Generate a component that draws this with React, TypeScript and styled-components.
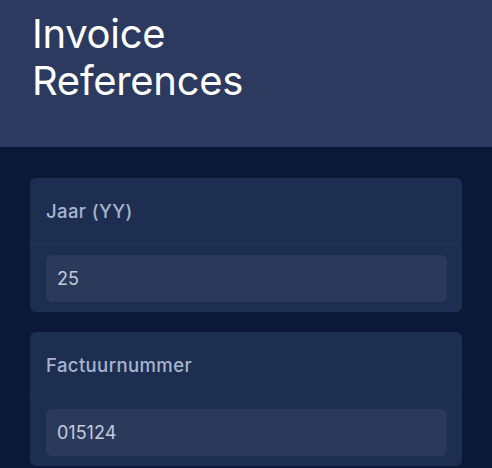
import React from "react";
import styled, { createGlobalStyle } from "styled-components";

const GlobalStyle = createGlobalStyle`
    html, body {
        margin: 0;
        padding: 0;
        background: #0a1937;
        font-family: Inter, "Noto Sans", sans-serif;
    }
`;

interface Field {
    label: string;
    value: string;
}

const fields: Field[] = [
    { label: "Jaar (YY)", value: "25" },
    { label: "Factuurnummer", value: "015124" },
];

const App = () => {
    return (
        <>
            <GlobalStyle />
            <Page>
                <Header>
                    <Title>
                        Invoice
                        <br />
                        References
                    </Title>
                </Header>
                <Content>
                    {fields.map((field) => (
                        <Card key={field.label}>
                            <CardHead>
                                <Label>{field.label}</Label>
                            </CardHead>
                            <CardBody>
                                <Input type="text" defaultValue={field.value} />
                            </CardBody>
                        </Card>
                    ))}
                </Content>
            </Page>
        </>
    );
};

const Page = styled.div`
    min-height: 468px;
    background: #0a1937;
`;

const Header = styled.header`
    background: #2b3a5e;
    padding: 10px 32px 43px;
`;

const Title = styled.h1`
    margin: 0;
    font-size: 40px;
    font-weight: 400;
    line-height: 47px;
    color: #ffffff;
    letter-spacing: -0.3px;
`;

const Content = styled.main`
    display: flex;
    flex-direction: column;
    gap: 20px;
    padding: 31px 30px;
`;

const Card = styled.section`
    background: #1e2e50;
    border-radius: 6px;
    overflow: hidden;
`;

const CardHead = styled.div`
    display: flex;
    align-items: center;
    height: 66px;
    padding: 0 16px;
    border-bottom: 1px solid #233457;
`;

const Label = styled.label`
    font-size: 18.5px;
    font-weight: 500;
    letter-spacing: 0.4px;
    color: #a6b4d0;
`;

const CardBody = styled.div`
    padding: 10px 15px 10px 16px;
`;

const Input = styled.input`
    display: block;
    box-sizing: border-box;
    width: 100%;
    height: 47px;
    padding: 0 11px;
    border: 0;
    border-radius: 6px;
    background: #2b3a5b;
    color: #c3cbdd;
    font-family: Inter, "Noto Sans", sans-serif;
    font-size: 18px;
    outline: none;
`;

export default App;
